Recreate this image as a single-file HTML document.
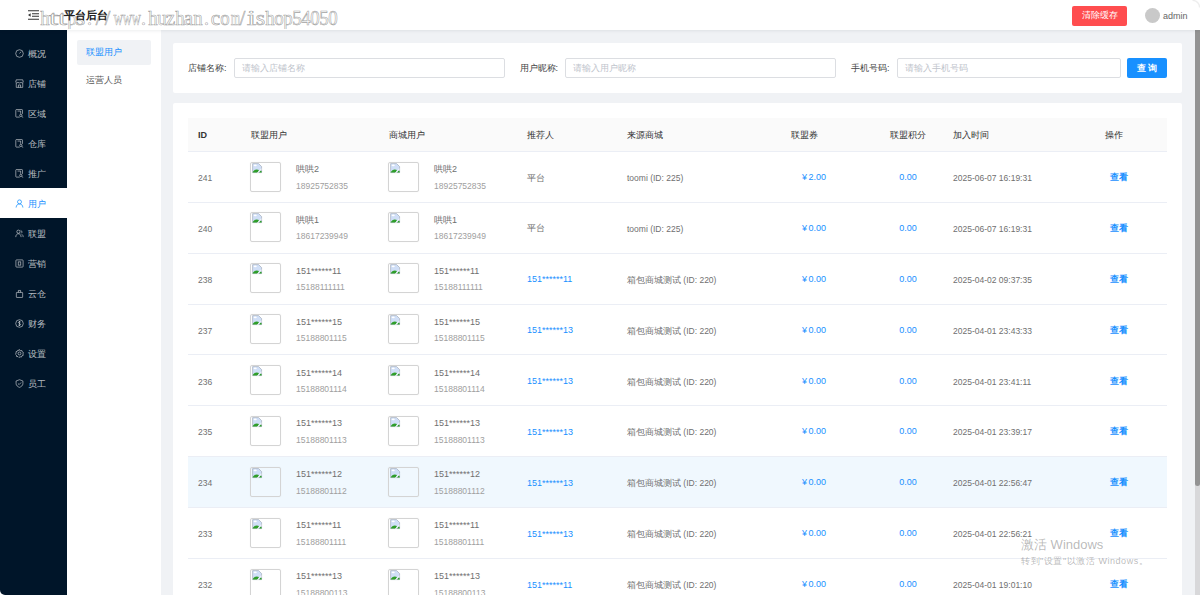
<!DOCTYPE html>
<html><head><meta charset="utf-8">
<style>
*{margin:0;padding:0;box-sizing:border-box}
html,body{width:1200px;height:595px;overflow:hidden;background:#f0f2f5;font-family:"Liberation Sans",sans-serif;color:#333}
.a{position:absolute;white-space:nowrap}
#hdr{position:absolute;left:0;top:0;width:1200px;height:30px;background:#fff;box-shadow:0 1px 3px rgba(0,21,41,0.08);z-index:3}
#side{position:absolute;left:0;top:30px;width:67px;height:565px;background:#001529;z-index:2;border-bottom-left-radius:5px}
#side2{position:absolute;left:67px;top:30px;width:94px;height:565px;background:#fff;z-index:1}
.mi{position:absolute;left:0;width:67px;height:30px;color:rgba(255,255,255,0.72);font-size:9px;line-height:30px}
.mi svg{position:absolute;left:15.2px;top:10.5px}
.mi span{position:absolute;left:28px;top:1px}
.mi.on{background:#fff;color:#1890ff}
.card{position:absolute;background:#fff;border-radius:2px}
.lbl{position:absolute;font-size:9px;color:#444;line-height:20px;top:57.5px}
.inp{position:absolute;top:57.5px;height:20px;border:1px solid #dcdee2;border-radius:2px;background:#fff}
.inp span{position:absolute;left:7px;top:0;line-height:18px;font-size:9px;color:#c0c4cc}
.th{position:absolute;top:118px;font-size:9px;color:#333;line-height:34px}
.row{position:absolute;left:188px;width:979px;height:51px}
.bl{position:absolute;left:188px;width:979px;height:1px;background:#ebeef5}
.c{position:absolute;font-size:8.5px;white-space:nowrap}
.img{position:absolute;width:31px;height:30px;border:1px solid #d4d4d4;border-radius:2px;box-shadow:0 0 1px rgba(0,0,0,0.1)}
.nm{color:#707070;font-size:9px}
.ph{color:#a0a0a0}
.lk{color:#1890ff;font-size:9px}
.gy{color:#707070}
</style></head><body>

<div id="hdr">
<svg class="a" style="left:28px;top:10px" width="11" height="10" viewBox="0 0 11 10"><path d="M0 0.7 H11 M4 3.7 H11 M4 6.3 H11 M0 9.3 H11" stroke="#333" stroke-width="1.1"/><path d="M0 5 L2.6 3.2 V6.8 Z" fill="#333"/></svg>
<div class="a" style="left:1072px;top:6px;width:55px;height:19.5px;background:#ff4d4f;border-radius:2px;color:#fff;font-size:9px;line-height:19.5px;text-align:center">清除缓存</div>
<div class="a" style="left:1144.5px;top:7.5px;width:15px;height:15px;border-radius:50%;background:#c9c9c9"></div>
<div class="a" style="left:1163px;top:10px;font-size:9px;color:#666;line-height:12px">admin</div>
<svg class="a" style="left:1186px;top:0;z-index:5" width="14" height="14" viewBox="0 0 14 14"><path d="M6.5 0.4 A7 7 0 0 1 13.6 7.5" stroke="rgba(0,0,0,0.07)" stroke-width="1.4" fill="none"/></svg>
</div>
<div class="a" style="left:0;top:585px;width:10px;height:10px;background:#fff;z-index:1"></div>
<div id="side">
<div class="mi" style="top:8px"><svg width="9" height="9" viewBox="0 0 10 10"><circle cx="5" cy="5" r="4.2" stroke="rgba(255,255,255,0.68)" fill="none" stroke-width="0.85"/><path d="M5 5 L6.8 3" stroke="rgba(255,255,255,0.68)" fill="none" stroke-width="0.85"/></svg><span>概况</span></div>
<div class="mi" style="top:38px"><svg width="9" height="9" viewBox="0 0 10 10"><path d="M1.4 4.4 V9.3 H8.6 V4.4" stroke="rgba(255,255,255,0.68)" fill="none" stroke-width="0.85"/><path d="M1.4 0.9 H8.6 L9.2 3.6 Q8.1 5 6.8 3.8 Q5 5 3.2 3.8 Q1.9 5 0.8 3.6 Z" stroke="rgba(255,255,255,0.68)" fill="none" stroke-width="0.85"/><path d="M3.8 9.3 V6.6 H6.2 V9.3" stroke="rgba(255,255,255,0.68)" fill="none" stroke-width="0.85"/></svg><span>店铺</span></div>
<div class="mi" style="top:68px"><svg width="9" height="9" viewBox="0 0 10 10"><path d="M5.3 9 H1.6 Q0.9 9 0.9 8.3 V1.3 Q0.9 0.6 1.6 0.6 H7.6 Q8.3 0.6 8.3 1.3 V5.4" stroke="rgba(255,255,255,0.68)" fill="none" stroke-width="0.85"/><path d="M2.8 2.3 H6.3 V5.2" stroke="rgba(255,255,255,0.68)" fill="none" stroke-width="0.85" stroke-width="0.7"/><circle cx="6.5" cy="7.1" r="1.3" stroke="rgba(255,255,255,0.68)" fill="none" stroke-width="0.85"/><path d="M7.4 8 L9.2 9.7" stroke="rgba(255,255,255,0.68)" fill="none" stroke-width="0.85"/></svg><span>区域</span></div>
<div class="mi" style="top:98px"><svg width="9" height="9" viewBox="0 0 10 10"><path d="M5.3 9 H1.6 Q0.9 9 0.9 8.3 V1.3 Q0.9 0.6 1.6 0.6 H7.6 Q8.3 0.6 8.3 1.3 V5.4" stroke="rgba(255,255,255,0.68)" fill="none" stroke-width="0.85"/><path d="M2.8 2.3 H6.3 V5.2" stroke="rgba(255,255,255,0.68)" fill="none" stroke-width="0.85" stroke-width="0.7"/><circle cx="6.5" cy="7.1" r="1.3" stroke="rgba(255,255,255,0.68)" fill="none" stroke-width="0.85"/><path d="M7.4 8 L9.2 9.7" stroke="rgba(255,255,255,0.68)" fill="none" stroke-width="0.85"/></svg><span>仓库</span></div>
<div class="mi" style="top:128px"><svg width="9" height="9" viewBox="0 0 10 10"><path d="M5.3 9 H1.6 Q0.9 9 0.9 8.3 V1.3 Q0.9 0.6 1.6 0.6 H7.6 Q8.3 0.6 8.3 1.3 V5.4" stroke="rgba(255,255,255,0.68)" fill="none" stroke-width="0.85"/><path d="M2.8 2.3 H6.3 V5.2" stroke="rgba(255,255,255,0.68)" fill="none" stroke-width="0.85" stroke-width="0.7"/><circle cx="6.5" cy="7.1" r="1.3" stroke="rgba(255,255,255,0.68)" fill="none" stroke-width="0.85"/><path d="M7.4 8 L9.2 9.7" stroke="rgba(255,255,255,0.68)" fill="none" stroke-width="0.85"/></svg><span>推广</span></div>
<div class="mi on" style="top:158px"><svg width="9" height="9" viewBox="0 0 10 10"><circle cx="5" cy="3.2" r="2.2" stroke="#1890ff" fill="none" stroke-width="0.85"/><path d="M1.2 9.5 C1.5 6.5 3 5.6 5 5.6 C7 5.6 8.5 6.5 8.8 9.5" stroke="#1890ff" fill="none" stroke-width="0.85"/></svg><span>用户</span></div>
<div class="mi" style="top:188px"><svg width="9" height="9" viewBox="0 0 10 10"><circle cx="3.8" cy="3" r="1.8" stroke="rgba(255,255,255,0.68)" fill="none" stroke-width="0.85"/><path d="M0.8 9 C1 6.5 2.2 5.3 3.8 5.3 C5.4 5.3 6.6 6.5 6.8 9" stroke="rgba(255,255,255,0.68)" fill="none" stroke-width="0.85"/><path d="M6.3 1.6 A1.8 1.8 0 0 1 6.8 4.9 M7.5 5.8 C8.5 6.4 9 7.4 9.2 9" stroke="rgba(255,255,255,0.68)" fill="none" stroke-width="0.85"/></svg><span>联盟</span></div>
<div class="mi" style="top:218px"><svg width="9" height="9" viewBox="0 0 10 10"><rect x="1" y="1" width="8" height="8" rx="0.8" stroke="rgba(255,255,255,0.68)" fill="none" stroke-width="0.85"/><rect x="3.6" y="3.2" width="2.8" height="3.6" stroke="rgba(255,255,255,0.68)" fill="none" stroke-width="0.85" stroke-width="0.7"/></svg><span>营销</span></div>
<div class="mi" style="top:248px"><svg width="9" height="9" viewBox="0 0 10 10"><rect x="1.5" y="3.8" width="7" height="5.6" rx="0.5" stroke="rgba(255,255,255,0.68)" fill="none" stroke-width="0.85"/><path d="M3.8 3.8 V1.6 H6.2 V3.8" stroke="rgba(255,255,255,0.68)" fill="none" stroke-width="0.85"/></svg><span>云仓</span></div>
<div class="mi" style="top:278px"><svg width="9" height="9" viewBox="0 0 10 10"><circle cx="5" cy="5" r="4.2" stroke="rgba(255,255,255,0.68)" fill="none" stroke-width="0.85"/><path d="M6.4 3.5 C6 2.8 4 2.7 3.8 3.8 C3.7 5 6.3 4.8 6.2 6.2 C6.1 7.3 4 7.3 3.5 6.4 M5 2.2 V7.8" stroke="rgba(255,255,255,0.68)" fill="none" stroke-width="0.85" stroke-width="0.8"/></svg><span>财务</span></div>
<div class="mi" style="top:308px"><svg width="9" height="9" viewBox="0 0 10 10"><path d="M5 0.6 L6 1.9 L7.6 1.7 L8 3.2 L9.4 4 L8.8 5.5 L9.2 7 L7.7 7.5 L7.1 9 L5.6 8.6 L4.4 9.5 L3.3 8.4 L1.8 8.4 L1.6 6.9 L0.5 5.8 L1.3 4.5 L1.1 3 L2.6 2.5 L3.3 1.1 L4.6 1.6 Z" stroke="rgba(255,255,255,0.68)" fill="none" stroke-width="0.85" stroke-width="0.8" stroke-linejoin="round"/><circle cx="5" cy="5" r="1.6" stroke="rgba(255,255,255,0.68)" fill="none" stroke-width="0.85"/></svg><span>设置</span></div>
<div class="mi" style="top:338px"><svg width="9" height="9" viewBox="0 0 10 10"><path d="M5 0.8 L8.8 2.2 V5 C8.8 7.2 7 8.6 5 9.3 C3 8.6 1.2 7.2 1.2 5 V2.2 Z" stroke="rgba(255,255,255,0.68)" fill="none" stroke-width="0.85"/><path d="M3.3 5 L4.6 6.2 L6.8 3.9" stroke="rgba(255,255,255,0.68)" fill="none" stroke-width="0.85"/></svg><span>员工</span></div>
</div>
<div id="side2">
<div class="a" style="left:10px;top:10px;width:74px;height:25px;background:#f0f2f5;border-radius:2px"></div>
<div class="a" style="left:19px;top:16px;font-size:9px;line-height:13px;color:#1890ff">联盟用户</div>
<div class="a" style="left:19px;top:43.5px;font-size:9px;line-height:13px;color:#555">运营人员</div>
</div>
<div class="a" style="left:1195px;top:30px;width:5px;height:565px;background:#d8d8da"></div>
<div class="a" style="left:1195px;top:30px;width:5px;height:455.5px;background:#939393;border-radius:0 0 2.5px 2.5px"></div>
<div class="card" style="left:173px;top:42.5px;width:1009px;height:50px"></div>
<div class="lbl" style="left:188px">店铺名称:</div>
<div class="inp" style="left:234px;width:271px"><span>请输入店铺名称</span></div>
<div class="lbl" style="left:519.5px">用户昵称:</div>
<div class="inp" style="left:565px;width:271px"><span>请输入用户昵称</span></div>
<div class="lbl" style="left:851px">手机号码:</div>
<div class="inp" style="left:897px;width:224px"><span>请输入手机号码</span></div>
<div class="a" style="left:1127px;top:57.5px;width:40px;height:20px;background:#1890ff;border-radius:2px;color:#fff;font-size:9px;font-weight:bold;line-height:20px;text-align:center">查 询</div>
<div class="card" style="left:173px;top:103px;width:1009px;height:600px"></div>
<div class="a" style="left:188px;top:118px;width:979px;height:33px;background:#fafafa"></div>
<div class="bl" style="top:151px"></div>
<div class="a" style="left:188px;top:457px;width:979px;height:50px;background:#f0f8fe"></div>
<div class="bl" style="top:202px"></div>
<div class="bl" style="top:253px"></div>
<div class="bl" style="top:304px"></div>
<div class="bl" style="top:354px"></div>
<div class="bl" style="top:405px"></div>
<div class="bl" style="top:456px"></div>
<div class="bl" style="top:507px"></div>
<div class="bl" style="top:558px"></div>
<div class="th" style="left:198px;font-weight:bold;">ID</div>
<div class="th" style="left:251px;">联盟用户</div>
<div class="th" style="left:389px;">商城用户</div>
<div class="th" style="left:527px;">推荐人</div>
<div class="th" style="left:627px;">来源商城</div>
<div class="th" style="left:791px;">联盟券</div>
<div class="th" style="left:890px;">联盟积分</div>
<div class="th" style="left:953px;">加入时间</div>
<div class="th" style="left:1105px;">操作</div>
<div class="row" style="top:151.0px;height:50.875px">
<div class="c gy" style="left:10px;top:21px;line-height:12px">241</div>
<div class="img" style="left:62px;top:10.5px"><svg style="position:absolute;left:0.5px;top:0px" width="11" height="11" viewBox="0 0 11 11"><path d="M0.6 0.6 H6.6 L9.6 3.6 V9.6 H0.6 Z" fill="#d0dff7" stroke="#9aa3ae" stroke-width="0.6"/><ellipse cx="3.2" cy="2.4" rx="1.6" ry="0.8" fill="#fff"/><path d="M0.6 9.6 C1.8 6.6 4.6 5.8 7 7 L5.6 9.6 Z" fill="#2f9e2a"/><path d="M7.2 9.6 L8.4 7.6 L9.6 8.2 V9.6 Z" fill="#2f9e2a"/><path d="M5.4 10 L9.8 5.6" stroke="#fff" stroke-width="0.9"/></svg></div>
<div class="c nm" style="left:108px;top:12px;line-height:12px">哄哄2</div>
<div class="c ph" style="left:108px;top:28.5px;line-height:12px">18925752835</div>
<div class="img" style="left:200px;top:10.5px"><svg style="position:absolute;left:0.5px;top:0px" width="11" height="11" viewBox="0 0 11 11"><path d="M0.6 0.6 H6.6 L9.6 3.6 V9.6 H0.6 Z" fill="#d0dff7" stroke="#9aa3ae" stroke-width="0.6"/><ellipse cx="3.2" cy="2.4" rx="1.6" ry="0.8" fill="#fff"/><path d="M0.6 9.6 C1.8 6.6 4.6 5.8 7 7 L5.6 9.6 Z" fill="#2f9e2a"/><path d="M7.2 9.6 L8.4 7.6 L9.6 8.2 V9.6 Z" fill="#2f9e2a"/><path d="M5.4 10 L9.8 5.6" stroke="#fff" stroke-width="0.9"/></svg></div>
<div class="c nm" style="left:246px;top:12px;line-height:12px">哄哄2</div>
<div class="c ph" style="left:246px;top:28.5px;line-height:12px">18925752835</div>
<div class="c gy" style="left:339px;top:20.5px;line-height:12px">平台</div>
<div class="c gy" style="left:439px;top:21px;line-height:12px">toomi (ID: 225)</div>
<div class="c lk" style="right:341px;top:20px;line-height:12px"><span style="margin-right:1.5px">¥</span>2.00</div>
<div class="c lk" style="left:700px;width:40px;text-align:center;top:20px;line-height:12px">0.00</div>
<div class="c gy" style="left:765px;top:21px;line-height:12px;font-size:8.5px">2025-06-07 16:19:31</div>
<div class="c lk" style="left:922px;top:20px;line-height:12px;font-weight:bold;font-size:9px">查看</div>
</div>
<div class="row" style="top:201.875px;height:50.875px">
<div class="c gy" style="left:10px;top:21px;line-height:12px">240</div>
<div class="img" style="left:62px;top:10.5px"><svg style="position:absolute;left:0.5px;top:0px" width="11" height="11" viewBox="0 0 11 11"><path d="M0.6 0.6 H6.6 L9.6 3.6 V9.6 H0.6 Z" fill="#d0dff7" stroke="#9aa3ae" stroke-width="0.6"/><ellipse cx="3.2" cy="2.4" rx="1.6" ry="0.8" fill="#fff"/><path d="M0.6 9.6 C1.8 6.6 4.6 5.8 7 7 L5.6 9.6 Z" fill="#2f9e2a"/><path d="M7.2 9.6 L8.4 7.6 L9.6 8.2 V9.6 Z" fill="#2f9e2a"/><path d="M5.4 10 L9.8 5.6" stroke="#fff" stroke-width="0.9"/></svg></div>
<div class="c nm" style="left:108px;top:12px;line-height:12px">哄哄1</div>
<div class="c ph" style="left:108px;top:28.5px;line-height:12px">18617239949</div>
<div class="img" style="left:200px;top:10.5px"><svg style="position:absolute;left:0.5px;top:0px" width="11" height="11" viewBox="0 0 11 11"><path d="M0.6 0.6 H6.6 L9.6 3.6 V9.6 H0.6 Z" fill="#d0dff7" stroke="#9aa3ae" stroke-width="0.6"/><ellipse cx="3.2" cy="2.4" rx="1.6" ry="0.8" fill="#fff"/><path d="M0.6 9.6 C1.8 6.6 4.6 5.8 7 7 L5.6 9.6 Z" fill="#2f9e2a"/><path d="M7.2 9.6 L8.4 7.6 L9.6 8.2 V9.6 Z" fill="#2f9e2a"/><path d="M5.4 10 L9.8 5.6" stroke="#fff" stroke-width="0.9"/></svg></div>
<div class="c nm" style="left:246px;top:12px;line-height:12px">哄哄1</div>
<div class="c ph" style="left:246px;top:28.5px;line-height:12px">18617239949</div>
<div class="c gy" style="left:339px;top:20.5px;line-height:12px">平台</div>
<div class="c gy" style="left:439px;top:21px;line-height:12px">toomi (ID: 225)</div>
<div class="c lk" style="right:341px;top:20px;line-height:12px"><span style="margin-right:1.5px">¥</span>0.00</div>
<div class="c lk" style="left:700px;width:40px;text-align:center;top:20px;line-height:12px">0.00</div>
<div class="c gy" style="left:765px;top:21px;line-height:12px;font-size:8.5px">2025-06-07 16:19:31</div>
<div class="c lk" style="left:922px;top:20px;line-height:12px;font-weight:bold;font-size:9px">查看</div>
</div>
<div class="row" style="top:252.75px;height:50.875px">
<div class="c gy" style="left:10px;top:21px;line-height:12px">238</div>
<div class="img" style="left:62px;top:10.5px"><svg style="position:absolute;left:0.5px;top:0px" width="11" height="11" viewBox="0 0 11 11"><path d="M0.6 0.6 H6.6 L9.6 3.6 V9.6 H0.6 Z" fill="#d0dff7" stroke="#9aa3ae" stroke-width="0.6"/><ellipse cx="3.2" cy="2.4" rx="1.6" ry="0.8" fill="#fff"/><path d="M0.6 9.6 C1.8 6.6 4.6 5.8 7 7 L5.6 9.6 Z" fill="#2f9e2a"/><path d="M7.2 9.6 L8.4 7.6 L9.6 8.2 V9.6 Z" fill="#2f9e2a"/><path d="M5.4 10 L9.8 5.6" stroke="#fff" stroke-width="0.9"/></svg></div>
<div class="c nm" style="left:108px;top:12px;line-height:12px">151******11</div>
<div class="c ph" style="left:108px;top:28.5px;line-height:12px">15188111111</div>
<div class="img" style="left:200px;top:10.5px"><svg style="position:absolute;left:0.5px;top:0px" width="11" height="11" viewBox="0 0 11 11"><path d="M0.6 0.6 H6.6 L9.6 3.6 V9.6 H0.6 Z" fill="#d0dff7" stroke="#9aa3ae" stroke-width="0.6"/><ellipse cx="3.2" cy="2.4" rx="1.6" ry="0.8" fill="#fff"/><path d="M0.6 9.6 C1.8 6.6 4.6 5.8 7 7 L5.6 9.6 Z" fill="#2f9e2a"/><path d="M7.2 9.6 L8.4 7.6 L9.6 8.2 V9.6 Z" fill="#2f9e2a"/><path d="M5.4 10 L9.8 5.6" stroke="#fff" stroke-width="0.9"/></svg></div>
<div class="c nm" style="left:246px;top:12px;line-height:12px">151******11</div>
<div class="c ph" style="left:246px;top:28.5px;line-height:12px">15188111111</div>
<div class="c lk" style="left:339px;top:20.5px;line-height:12px">151******11</div>
<div class="c gy" style="left:439px;top:21px;line-height:12px">箱包商城测试 (ID: 220)</div>
<div class="c lk" style="right:341px;top:20px;line-height:12px"><span style="margin-right:1.5px">¥</span>0.00</div>
<div class="c lk" style="left:700px;width:40px;text-align:center;top:20px;line-height:12px">0.00</div>
<div class="c gy" style="left:765px;top:21px;line-height:12px;font-size:8.5px">2025-04-02 09:37:35</div>
<div class="c lk" style="left:922px;top:20px;line-height:12px;font-weight:bold;font-size:9px">查看</div>
</div>
<div class="row" style="top:303.625px;height:50.875px">
<div class="c gy" style="left:10px;top:21px;line-height:12px">237</div>
<div class="img" style="left:62px;top:10.5px"><svg style="position:absolute;left:0.5px;top:0px" width="11" height="11" viewBox="0 0 11 11"><path d="M0.6 0.6 H6.6 L9.6 3.6 V9.6 H0.6 Z" fill="#d0dff7" stroke="#9aa3ae" stroke-width="0.6"/><ellipse cx="3.2" cy="2.4" rx="1.6" ry="0.8" fill="#fff"/><path d="M0.6 9.6 C1.8 6.6 4.6 5.8 7 7 L5.6 9.6 Z" fill="#2f9e2a"/><path d="M7.2 9.6 L8.4 7.6 L9.6 8.2 V9.6 Z" fill="#2f9e2a"/><path d="M5.4 10 L9.8 5.6" stroke="#fff" stroke-width="0.9"/></svg></div>
<div class="c nm" style="left:108px;top:12px;line-height:12px">151******15</div>
<div class="c ph" style="left:108px;top:28.5px;line-height:12px">15188801115</div>
<div class="img" style="left:200px;top:10.5px"><svg style="position:absolute;left:0.5px;top:0px" width="11" height="11" viewBox="0 0 11 11"><path d="M0.6 0.6 H6.6 L9.6 3.6 V9.6 H0.6 Z" fill="#d0dff7" stroke="#9aa3ae" stroke-width="0.6"/><ellipse cx="3.2" cy="2.4" rx="1.6" ry="0.8" fill="#fff"/><path d="M0.6 9.6 C1.8 6.6 4.6 5.8 7 7 L5.6 9.6 Z" fill="#2f9e2a"/><path d="M7.2 9.6 L8.4 7.6 L9.6 8.2 V9.6 Z" fill="#2f9e2a"/><path d="M5.4 10 L9.8 5.6" stroke="#fff" stroke-width="0.9"/></svg></div>
<div class="c nm" style="left:246px;top:12px;line-height:12px">151******15</div>
<div class="c ph" style="left:246px;top:28.5px;line-height:12px">15188801115</div>
<div class="c lk" style="left:339px;top:20.5px;line-height:12px">151******13</div>
<div class="c gy" style="left:439px;top:21px;line-height:12px">箱包商城测试 (ID: 220)</div>
<div class="c lk" style="right:341px;top:20px;line-height:12px"><span style="margin-right:1.5px">¥</span>0.00</div>
<div class="c lk" style="left:700px;width:40px;text-align:center;top:20px;line-height:12px">0.00</div>
<div class="c gy" style="left:765px;top:21px;line-height:12px;font-size:8.5px">2025-04-01 23:43:33</div>
<div class="c lk" style="left:922px;top:20px;line-height:12px;font-weight:bold;font-size:9px">查看</div>
</div>
<div class="row" style="top:354.5px;height:50.875px">
<div class="c gy" style="left:10px;top:21px;line-height:12px">236</div>
<div class="img" style="left:62px;top:10.5px"><svg style="position:absolute;left:0.5px;top:0px" width="11" height="11" viewBox="0 0 11 11"><path d="M0.6 0.6 H6.6 L9.6 3.6 V9.6 H0.6 Z" fill="#d0dff7" stroke="#9aa3ae" stroke-width="0.6"/><ellipse cx="3.2" cy="2.4" rx="1.6" ry="0.8" fill="#fff"/><path d="M0.6 9.6 C1.8 6.6 4.6 5.8 7 7 L5.6 9.6 Z" fill="#2f9e2a"/><path d="M7.2 9.6 L8.4 7.6 L9.6 8.2 V9.6 Z" fill="#2f9e2a"/><path d="M5.4 10 L9.8 5.6" stroke="#fff" stroke-width="0.9"/></svg></div>
<div class="c nm" style="left:108px;top:12px;line-height:12px">151******14</div>
<div class="c ph" style="left:108px;top:28.5px;line-height:12px">15188801114</div>
<div class="img" style="left:200px;top:10.5px"><svg style="position:absolute;left:0.5px;top:0px" width="11" height="11" viewBox="0 0 11 11"><path d="M0.6 0.6 H6.6 L9.6 3.6 V9.6 H0.6 Z" fill="#d0dff7" stroke="#9aa3ae" stroke-width="0.6"/><ellipse cx="3.2" cy="2.4" rx="1.6" ry="0.8" fill="#fff"/><path d="M0.6 9.6 C1.8 6.6 4.6 5.8 7 7 L5.6 9.6 Z" fill="#2f9e2a"/><path d="M7.2 9.6 L8.4 7.6 L9.6 8.2 V9.6 Z" fill="#2f9e2a"/><path d="M5.4 10 L9.8 5.6" stroke="#fff" stroke-width="0.9"/></svg></div>
<div class="c nm" style="left:246px;top:12px;line-height:12px">151******14</div>
<div class="c ph" style="left:246px;top:28.5px;line-height:12px">15188801114</div>
<div class="c lk" style="left:339px;top:20.5px;line-height:12px">151******13</div>
<div class="c gy" style="left:439px;top:21px;line-height:12px">箱包商城测试 (ID: 220)</div>
<div class="c lk" style="right:341px;top:20px;line-height:12px"><span style="margin-right:1.5px">¥</span>0.00</div>
<div class="c lk" style="left:700px;width:40px;text-align:center;top:20px;line-height:12px">0.00</div>
<div class="c gy" style="left:765px;top:21px;line-height:12px;font-size:8.5px">2025-04-01 23:41:11</div>
<div class="c lk" style="left:922px;top:20px;line-height:12px;font-weight:bold;font-size:9px">查看</div>
</div>
<div class="row" style="top:405.375px;height:50.875px">
<div class="c gy" style="left:10px;top:21px;line-height:12px">235</div>
<div class="img" style="left:62px;top:10.5px"><svg style="position:absolute;left:0.5px;top:0px" width="11" height="11" viewBox="0 0 11 11"><path d="M0.6 0.6 H6.6 L9.6 3.6 V9.6 H0.6 Z" fill="#d0dff7" stroke="#9aa3ae" stroke-width="0.6"/><ellipse cx="3.2" cy="2.4" rx="1.6" ry="0.8" fill="#fff"/><path d="M0.6 9.6 C1.8 6.6 4.6 5.8 7 7 L5.6 9.6 Z" fill="#2f9e2a"/><path d="M7.2 9.6 L8.4 7.6 L9.6 8.2 V9.6 Z" fill="#2f9e2a"/><path d="M5.4 10 L9.8 5.6" stroke="#fff" stroke-width="0.9"/></svg></div>
<div class="c nm" style="left:108px;top:12px;line-height:12px">151******13</div>
<div class="c ph" style="left:108px;top:28.5px;line-height:12px">15188801113</div>
<div class="img" style="left:200px;top:10.5px"><svg style="position:absolute;left:0.5px;top:0px" width="11" height="11" viewBox="0 0 11 11"><path d="M0.6 0.6 H6.6 L9.6 3.6 V9.6 H0.6 Z" fill="#d0dff7" stroke="#9aa3ae" stroke-width="0.6"/><ellipse cx="3.2" cy="2.4" rx="1.6" ry="0.8" fill="#fff"/><path d="M0.6 9.6 C1.8 6.6 4.6 5.8 7 7 L5.6 9.6 Z" fill="#2f9e2a"/><path d="M7.2 9.6 L8.4 7.6 L9.6 8.2 V9.6 Z" fill="#2f9e2a"/><path d="M5.4 10 L9.8 5.6" stroke="#fff" stroke-width="0.9"/></svg></div>
<div class="c nm" style="left:246px;top:12px;line-height:12px">151******13</div>
<div class="c ph" style="left:246px;top:28.5px;line-height:12px">15188801113</div>
<div class="c lk" style="left:339px;top:20.5px;line-height:12px">151******13</div>
<div class="c gy" style="left:439px;top:21px;line-height:12px">箱包商城测试 (ID: 220)</div>
<div class="c lk" style="right:341px;top:20px;line-height:12px"><span style="margin-right:1.5px">¥</span>0.00</div>
<div class="c lk" style="left:700px;width:40px;text-align:center;top:20px;line-height:12px">0.00</div>
<div class="c gy" style="left:765px;top:21px;line-height:12px;font-size:8.5px">2025-04-01 23:39:17</div>
<div class="c lk" style="left:922px;top:20px;line-height:12px;font-weight:bold;font-size:9px">查看</div>
</div>
<div class="row" style="top:456.25px;height:50.875px">
<div class="c gy" style="left:10px;top:21px;line-height:12px">234</div>
<div class="img" style="left:62px;top:10.5px"><svg style="position:absolute;left:0.5px;top:0px" width="11" height="11" viewBox="0 0 11 11"><path d="M0.6 0.6 H6.6 L9.6 3.6 V9.6 H0.6 Z" fill="#d0dff7" stroke="#9aa3ae" stroke-width="0.6"/><ellipse cx="3.2" cy="2.4" rx="1.6" ry="0.8" fill="#fff"/><path d="M0.6 9.6 C1.8 6.6 4.6 5.8 7 7 L5.6 9.6 Z" fill="#2f9e2a"/><path d="M7.2 9.6 L8.4 7.6 L9.6 8.2 V9.6 Z" fill="#2f9e2a"/><path d="M5.4 10 L9.8 5.6" stroke="#fff" stroke-width="0.9"/></svg></div>
<div class="c nm" style="left:108px;top:12px;line-height:12px">151******12</div>
<div class="c ph" style="left:108px;top:28.5px;line-height:12px">15188801112</div>
<div class="img" style="left:200px;top:10.5px"><svg style="position:absolute;left:0.5px;top:0px" width="11" height="11" viewBox="0 0 11 11"><path d="M0.6 0.6 H6.6 L9.6 3.6 V9.6 H0.6 Z" fill="#d0dff7" stroke="#9aa3ae" stroke-width="0.6"/><ellipse cx="3.2" cy="2.4" rx="1.6" ry="0.8" fill="#fff"/><path d="M0.6 9.6 C1.8 6.6 4.6 5.8 7 7 L5.6 9.6 Z" fill="#2f9e2a"/><path d="M7.2 9.6 L8.4 7.6 L9.6 8.2 V9.6 Z" fill="#2f9e2a"/><path d="M5.4 10 L9.8 5.6" stroke="#fff" stroke-width="0.9"/></svg></div>
<div class="c nm" style="left:246px;top:12px;line-height:12px">151******12</div>
<div class="c ph" style="left:246px;top:28.5px;line-height:12px">15188801112</div>
<div class="c lk" style="left:339px;top:20.5px;line-height:12px">151******13</div>
<div class="c gy" style="left:439px;top:21px;line-height:12px">箱包商城测试 (ID: 220)</div>
<div class="c lk" style="right:341px;top:20px;line-height:12px"><span style="margin-right:1.5px">¥</span>0.00</div>
<div class="c lk" style="left:700px;width:40px;text-align:center;top:20px;line-height:12px">0.00</div>
<div class="c gy" style="left:765px;top:21px;line-height:12px;font-size:8.5px">2025-04-01 22:56:47</div>
<div class="c lk" style="left:922px;top:20px;line-height:12px;font-weight:bold;font-size:9px">查看</div>
</div>
<div class="row" style="top:507.125px;height:50.875px">
<div class="c gy" style="left:10px;top:21px;line-height:12px">233</div>
<div class="img" style="left:62px;top:10.5px"><svg style="position:absolute;left:0.5px;top:0px" width="11" height="11" viewBox="0 0 11 11"><path d="M0.6 0.6 H6.6 L9.6 3.6 V9.6 H0.6 Z" fill="#d0dff7" stroke="#9aa3ae" stroke-width="0.6"/><ellipse cx="3.2" cy="2.4" rx="1.6" ry="0.8" fill="#fff"/><path d="M0.6 9.6 C1.8 6.6 4.6 5.8 7 7 L5.6 9.6 Z" fill="#2f9e2a"/><path d="M7.2 9.6 L8.4 7.6 L9.6 8.2 V9.6 Z" fill="#2f9e2a"/><path d="M5.4 10 L9.8 5.6" stroke="#fff" stroke-width="0.9"/></svg></div>
<div class="c nm" style="left:108px;top:12px;line-height:12px">151******11</div>
<div class="c ph" style="left:108px;top:28.5px;line-height:12px">15188801111</div>
<div class="img" style="left:200px;top:10.5px"><svg style="position:absolute;left:0.5px;top:0px" width="11" height="11" viewBox="0 0 11 11"><path d="M0.6 0.6 H6.6 L9.6 3.6 V9.6 H0.6 Z" fill="#d0dff7" stroke="#9aa3ae" stroke-width="0.6"/><ellipse cx="3.2" cy="2.4" rx="1.6" ry="0.8" fill="#fff"/><path d="M0.6 9.6 C1.8 6.6 4.6 5.8 7 7 L5.6 9.6 Z" fill="#2f9e2a"/><path d="M7.2 9.6 L8.4 7.6 L9.6 8.2 V9.6 Z" fill="#2f9e2a"/><path d="M5.4 10 L9.8 5.6" stroke="#fff" stroke-width="0.9"/></svg></div>
<div class="c nm" style="left:246px;top:12px;line-height:12px">151******11</div>
<div class="c ph" style="left:246px;top:28.5px;line-height:12px">15188801111</div>
<div class="c lk" style="left:339px;top:20.5px;line-height:12px">151******13</div>
<div class="c gy" style="left:439px;top:21px;line-height:12px">箱包商城测试 (ID: 220)</div>
<div class="c lk" style="right:341px;top:20px;line-height:12px"><span style="margin-right:1.5px">¥</span>0.00</div>
<div class="c lk" style="left:700px;width:40px;text-align:center;top:20px;line-height:12px">0.00</div>
<div class="c gy" style="left:765px;top:21px;line-height:12px;font-size:8.5px">2025-04-01 22:56:21</div>
<div class="c lk" style="left:922px;top:20px;line-height:12px;font-weight:bold;font-size:9px">查看</div>
</div>
<div class="row" style="top:558.0px;height:50.875px">
<div class="c gy" style="left:10px;top:21px;line-height:12px">232</div>
<div class="img" style="left:62px;top:10.5px"><svg style="position:absolute;left:0.5px;top:0px" width="11" height="11" viewBox="0 0 11 11"><path d="M0.6 0.6 H6.6 L9.6 3.6 V9.6 H0.6 Z" fill="#d0dff7" stroke="#9aa3ae" stroke-width="0.6"/><ellipse cx="3.2" cy="2.4" rx="1.6" ry="0.8" fill="#fff"/><path d="M0.6 9.6 C1.8 6.6 4.6 5.8 7 7 L5.6 9.6 Z" fill="#2f9e2a"/><path d="M7.2 9.6 L8.4 7.6 L9.6 8.2 V9.6 Z" fill="#2f9e2a"/><path d="M5.4 10 L9.8 5.6" stroke="#fff" stroke-width="0.9"/></svg></div>
<div class="c nm" style="left:108px;top:12px;line-height:12px">151******13</div>
<div class="c ph" style="left:108px;top:28.5px;line-height:12px">15188800113</div>
<div class="img" style="left:200px;top:10.5px"><svg style="position:absolute;left:0.5px;top:0px" width="11" height="11" viewBox="0 0 11 11"><path d="M0.6 0.6 H6.6 L9.6 3.6 V9.6 H0.6 Z" fill="#d0dff7" stroke="#9aa3ae" stroke-width="0.6"/><ellipse cx="3.2" cy="2.4" rx="1.6" ry="0.8" fill="#fff"/><path d="M0.6 9.6 C1.8 6.6 4.6 5.8 7 7 L5.6 9.6 Z" fill="#2f9e2a"/><path d="M7.2 9.6 L8.4 7.6 L9.6 8.2 V9.6 Z" fill="#2f9e2a"/><path d="M5.4 10 L9.8 5.6" stroke="#fff" stroke-width="0.9"/></svg></div>
<div class="c nm" style="left:246px;top:12px;line-height:12px">151******13</div>
<div class="c ph" style="left:246px;top:28.5px;line-height:12px">15188800113</div>
<div class="c lk" style="left:339px;top:20.5px;line-height:12px">151******11</div>
<div class="c gy" style="left:439px;top:21px;line-height:12px">箱包商城测试 (ID: 220)</div>
<div class="c lk" style="right:341px;top:20px;line-height:12px"><span style="margin-right:1.5px">¥</span>0.00</div>
<div class="c lk" style="left:700px;width:40px;text-align:center;top:20px;line-height:12px">0.00</div>
<div class="c gy" style="left:765px;top:21px;line-height:12px;font-size:8.5px">2025-04-01 19:01:10</div>
<div class="c lk" style="left:922px;top:20px;line-height:12px;font-weight:bold;font-size:9px">查看</div>
</div>
<div class="a" style="left:40px;top:0px;width:300px;height:28.5px;overflow:hidden;z-index:10"><span style="position:absolute;left:0px;top:6.5px;width:9px;text-align:center;font-family:'Liberation Serif',serif;font-weight:normal;font-size:20px;line-height:22px;color:rgba(255,255,255,0.95);-webkit-text-stroke:0.6px rgba(130,130,130,0.75);display:inline-block;transform:scaleX(0.940)">h</span><span style="position:absolute;left:9px;top:6.5px;width:9px;text-align:center;font-family:'Liberation Serif',serif;font-weight:normal;font-size:20px;line-height:22px;color:rgba(255,255,255,0.95);-webkit-text-stroke:0.6px rgba(130,130,130,0.75);display:inline-block;transform:scaleX(1.691)">t</span><span style="position:absolute;left:18px;top:6.5px;width:9px;text-align:center;font-family:'Liberation Serif',serif;font-weight:normal;font-size:20px;line-height:22px;color:rgba(255,255,255,0.95);-webkit-text-stroke:0.6px rgba(130,130,130,0.75);display:inline-block;transform:scaleX(1.691)">t</span><span style="position:absolute;left:27px;top:6.5px;width:9px;text-align:center;font-family:'Liberation Serif',serif;font-weight:normal;font-size:20px;line-height:22px;color:rgba(255,255,255,0.95);-webkit-text-stroke:0.6px rgba(130,130,130,0.75);display:inline-block;transform:scaleX(0.940)">p</span><span style="position:absolute;left:36px;top:6.5px;width:9px;text-align:center;font-family:'Liberation Serif',serif;font-weight:normal;font-size:20px;line-height:22px;color:rgba(255,255,255,0.95);-webkit-text-stroke:0.6px rgba(130,130,130,0.75);display:inline-block;transform:scaleX(1.208)">s</span><span style="position:absolute;left:45px;top:6.5px;width:9px;text-align:center;font-family:'Liberation Serif',serif;font-weight:normal;font-size:20px;line-height:22px;color:rgba(255,255,255,0.95);-webkit-text-stroke:0.6px rgba(130,130,130,0.75);display:inline-block;transform:scaleX(1.000)">:</span><span style="position:absolute;left:54px;top:6.5px;width:9px;text-align:center;font-family:'Liberation Serif',serif;font-weight:normal;font-size:20px;line-height:22px;color:rgba(255,255,255,0.95);-webkit-text-stroke:0.6px rgba(130,130,130,0.75);display:inline-block;transform:scaleX(1.000)">/</span><span style="position:absolute;left:63px;top:6.5px;width:9px;text-align:center;font-family:'Liberation Serif',serif;font-weight:normal;font-size:20px;line-height:22px;color:rgba(255,255,255,0.95);-webkit-text-stroke:0.6px rgba(130,130,130,0.75);display:inline-block;transform:scaleX(1.000)">/</span><span style="position:absolute;left:72px;top:6.5px;width:9px;text-align:center;font-family:'Liberation Serif',serif;font-weight:normal;font-size:20px;line-height:22px;color:rgba(255,255,255,0.95);-webkit-text-stroke:0.6px rgba(130,130,130,0.75);display:inline-block;transform:scaleX(0.651)">w</span><span style="position:absolute;left:81px;top:6.5px;width:9px;text-align:center;font-family:'Liberation Serif',serif;font-weight:normal;font-size:20px;line-height:22px;color:rgba(255,255,255,0.95);-webkit-text-stroke:0.6px rgba(130,130,130,0.75);display:inline-block;transform:scaleX(0.651)">w</span><span style="position:absolute;left:90px;top:6.5px;width:9px;text-align:center;font-family:'Liberation Serif',serif;font-weight:normal;font-size:20px;line-height:22px;color:rgba(255,255,255,0.95);-webkit-text-stroke:0.6px rgba(130,130,130,0.75);display:inline-block;transform:scaleX(0.651)">w</span><span style="position:absolute;left:99px;top:6.5px;width:9px;text-align:center;font-family:'Liberation Serif',serif;font-weight:normal;font-size:20px;line-height:22px;color:rgba(255,255,255,0.95);-webkit-text-stroke:0.6px rgba(130,130,130,0.75);display:inline-block;transform:scaleX(1.000)">.</span><span style="position:absolute;left:108px;top:6.5px;width:9px;text-align:center;font-family:'Liberation Serif',serif;font-weight:normal;font-size:20px;line-height:22px;color:rgba(255,255,255,0.95);-webkit-text-stroke:0.6px rgba(130,130,130,0.75);display:inline-block;transform:scaleX(0.940)">h</span><span style="position:absolute;left:117px;top:6.5px;width:9px;text-align:center;font-family:'Liberation Serif',serif;font-weight:normal;font-size:20px;line-height:22px;color:rgba(255,255,255,0.95);-webkit-text-stroke:0.6px rgba(130,130,130,0.75);display:inline-block;transform:scaleX(0.940)">u</span><span style="position:absolute;left:126px;top:6.5px;width:9px;text-align:center;font-family:'Liberation Serif',serif;font-weight:normal;font-size:20px;line-height:22px;color:rgba(255,255,255,0.95);-webkit-text-stroke:0.6px rgba(130,130,130,0.75);display:inline-block;transform:scaleX(1.059)">z</span><span style="position:absolute;left:135px;top:6.5px;width:9px;text-align:center;font-family:'Liberation Serif',serif;font-weight:normal;font-size:20px;line-height:22px;color:rgba(255,255,255,0.95);-webkit-text-stroke:0.6px rgba(130,130,130,0.75);display:inline-block;transform:scaleX(0.940)">h</span><span style="position:absolute;left:144px;top:6.5px;width:9px;text-align:center;font-family:'Liberation Serif',serif;font-weight:normal;font-size:20px;line-height:22px;color:rgba(255,255,255,0.95);-webkit-text-stroke:0.6px rgba(130,130,130,0.75);display:inline-block;transform:scaleX(1.059)">a</span><span style="position:absolute;left:153px;top:6.5px;width:9px;text-align:center;font-family:'Liberation Serif',serif;font-weight:normal;font-size:20px;line-height:22px;color:rgba(255,255,255,0.95);-webkit-text-stroke:0.6px rgba(130,130,130,0.75);display:inline-block;transform:scaleX(0.940)">n</span><span style="position:absolute;left:162px;top:6.5px;width:9px;text-align:center;font-family:'Liberation Serif',serif;font-weight:normal;font-size:20px;line-height:22px;color:rgba(255,255,255,0.95);-webkit-text-stroke:0.6px rgba(130,130,130,0.75);display:inline-block;transform:scaleX(1.000)">.</span><span style="position:absolute;left:171px;top:6.5px;width:9px;text-align:center;font-family:'Liberation Serif',serif;font-weight:normal;font-size:20px;line-height:22px;color:rgba(255,255,255,0.95);-webkit-text-stroke:0.6px rgba(130,130,130,0.75);display:inline-block;transform:scaleX(1.059)">c</span><span style="position:absolute;left:180px;top:6.5px;width:9px;text-align:center;font-family:'Liberation Serif',serif;font-weight:normal;font-size:20px;line-height:22px;color:rgba(255,255,255,0.95);-webkit-text-stroke:0.6px rgba(130,130,130,0.75);display:inline-block;transform:scaleX(0.940)">o</span><span style="position:absolute;left:189px;top:6.5px;width:9px;text-align:center;font-family:'Liberation Serif',serif;font-weight:normal;font-size:20px;line-height:22px;color:rgba(255,255,255,0.95);-webkit-text-stroke:0.6px rgba(130,130,130,0.75);display:inline-block;transform:scaleX(0.604)">m</span><span style="position:absolute;left:198px;top:6.5px;width:9px;text-align:center;font-family:'Liberation Serif',serif;font-weight:normal;font-size:20px;line-height:22px;color:rgba(255,255,255,0.95);-webkit-text-stroke:0.6px rgba(130,130,130,0.75);display:inline-block;transform:scaleX(1.000)">/</span><span style="position:absolute;left:207px;top:6.5px;width:9px;text-align:center;font-family:'Liberation Serif',serif;font-weight:normal;font-size:20px;line-height:22px;color:rgba(255,255,255,0.95);-webkit-text-stroke:0.6px rgba(130,130,130,0.75);display:inline-block;transform:scaleX(1.691)">i</span><span style="position:absolute;left:216px;top:6.5px;width:9px;text-align:center;font-family:'Liberation Serif',serif;font-weight:normal;font-size:20px;line-height:22px;color:rgba(255,255,255,0.95);-webkit-text-stroke:0.6px rgba(130,130,130,0.75);display:inline-block;transform:scaleX(1.208)">s</span><span style="position:absolute;left:225px;top:6.5px;width:9px;text-align:center;font-family:'Liberation Serif',serif;font-weight:normal;font-size:20px;line-height:22px;color:rgba(255,255,255,0.95);-webkit-text-stroke:0.6px rgba(130,130,130,0.75);display:inline-block;transform:scaleX(0.940)">h</span><span style="position:absolute;left:234px;top:6.5px;width:9px;text-align:center;font-family:'Liberation Serif',serif;font-weight:normal;font-size:20px;line-height:22px;color:rgba(255,255,255,0.95);-webkit-text-stroke:0.6px rgba(130,130,130,0.75);display:inline-block;transform:scaleX(0.940)">o</span><span style="position:absolute;left:243px;top:6.5px;width:9px;text-align:center;font-family:'Liberation Serif',serif;font-weight:normal;font-size:20px;line-height:22px;color:rgba(255,255,255,0.95);-webkit-text-stroke:0.6px rgba(130,130,130,0.75);display:inline-block;transform:scaleX(0.940)">p</span><span style="position:absolute;left:252px;top:6.5px;width:9px;text-align:center;font-family:'Liberation Serif',serif;font-weight:normal;font-size:20px;line-height:22px;color:rgba(255,255,255,0.95);-webkit-text-stroke:0.6px rgba(130,130,130,0.75);display:inline-block;transform:scaleX(0.940)">5</span><span style="position:absolute;left:261px;top:6.5px;width:9px;text-align:center;font-family:'Liberation Serif',serif;font-weight:normal;font-size:20px;line-height:22px;color:rgba(255,255,255,0.95);-webkit-text-stroke:0.6px rgba(130,130,130,0.75);display:inline-block;transform:scaleX(0.940)">4</span><span style="position:absolute;left:270px;top:6.5px;width:9px;text-align:center;font-family:'Liberation Serif',serif;font-weight:normal;font-size:20px;line-height:22px;color:rgba(255,255,255,0.95);-webkit-text-stroke:0.6px rgba(130,130,130,0.75);display:inline-block;transform:scaleX(0.940)">0</span><span style="position:absolute;left:279px;top:6.5px;width:9px;text-align:center;font-family:'Liberation Serif',serif;font-weight:normal;font-size:20px;line-height:22px;color:rgba(255,255,255,0.95);-webkit-text-stroke:0.6px rgba(130,130,130,0.75);display:inline-block;transform:scaleX(0.940)">5</span><span style="position:absolute;left:288px;top:6.5px;width:9px;text-align:center;font-family:'Liberation Serif',serif;font-weight:normal;font-size:20px;line-height:22px;color:rgba(255,255,255,0.95);-webkit-text-stroke:0.6px rgba(130,130,130,0.75);display:inline-block;transform:scaleX(0.940)">0</span></div>
<div class="a" style="left:1021px;top:537px;font-size:13px;line-height:16px;color:rgba(100,100,100,0.45);z-index:10">激活 Windows</div>
<div class="a" style="left:1021px;top:555px;font-size:9px;line-height:12px;letter-spacing:0.55px;color:rgba(100,100,100,0.45);z-index:10">转到"设置"以激活 Windows。</div>
<div class="a" style="left:64px;top:7px;font-size:11px;font-weight:bold;color:#222;line-height:16px;z-index:20">平台后台</div>
</body></html>
